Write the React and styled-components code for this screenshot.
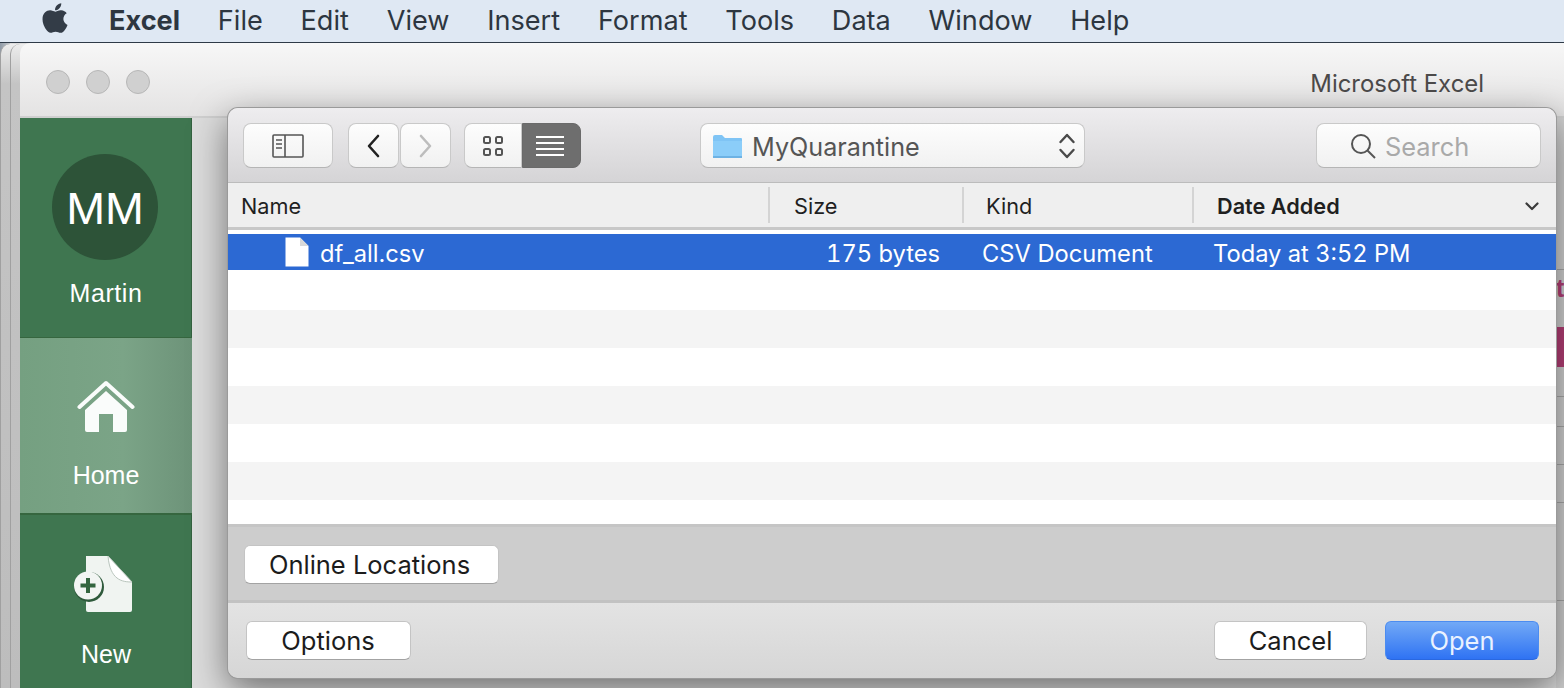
import React from "react";
import styled, { createGlobalStyle } from "styled-components";
import { FaApple } from "react-icons/fa";

const Global = createGlobalStyle`
  html, body { margin: 0; padding: 0; }
  body { font-family: Inter, "Liberation Sans", sans-serif; background: #c9c9c9; }
`;
const Page = styled.div`
  width: 1564px; height: 688px; overflow: hidden; display: flex; flex-direction: column;
`;
const MenuBar = styled.div`
  height: 42px; flex: none; display: flex; align-items: center; padding-left: 40px;
  background: #dfe8f3; border-bottom: 1px solid #2e3a47; color: #2d3640;
`;
const AppleMark = styled(FaApple)`
  width: 30px; height: 34px; margin-right: 39px; margin-top: -7px; color: #333c47;
`;
const MenuItem = styled.span`
  font-size: 27.1px; line-height: 40px; margin-right: 37.8px; font-weight: ${p => (p.$bold ? 700 : 400)};
`;
const Desktop = styled.div`
  flex: 1; position: relative; display: flex; padding-left: 20px;
  background: linear-gradient(90deg, #8f9aa6, #c5c8cc 10px, #dcdcdc 10px);
`;
const BackWindow = styled.div`
  position: absolute; top: 1px; bottom: 0; left: ${p => p.$left}px; width: 30px;
  border-radius: 10px 0 0 0; border-left: 1px solid #a0a0a0;
  background: linear-gradient(180deg, #ededed, #c4c4c4 40px, #bdbdbd);
`;
const MainWindow = styled.div`
  flex: 1; position: relative; display: flex; flex-direction: column; min-width: 0;
  border-radius: 10px 0 0 0; overflow: hidden;
`;
const TitleBar = styled.div`
  height: 73px; flex: none; display: flex; align-items: center; gap: 16px; padding-left: 26px;
  background: linear-gradient(180deg, #f7f7f7, #e4e3e3); border-bottom: 2px solid #cfcfcf;
  position: relative;
`;
const Light = styled.span`
  width: 22px; height: 22px; border-radius: 50%; background: #d0d0d0; border: 1px solid #b7b7b7;
  margin-top: 4px;
`;
const WindowTitle = styled.span`
  margin-left: auto; margin-right: 80px; font-size: 23.9px; color: #4c4a4a; margin-top: 8px;
`;
const Body = styled.div`
  flex: 1; display: flex; min-height: 0;
`;
const Sidebar = styled.nav`
  width: 172px; flex: none; display: flex; flex-direction: column; background: #3f7650;
  color: #fff; box-shadow: inset -1px 0 0 #33613f;
`;
const Profile = styled.div`
  height: 220px; flex: none; display: flex; flex-direction: column; align-items: center;
  padding-top: 36px; box-sizing: border-box; border-bottom: 1px solid #36663f;
`;
const Avatar = styled.div`
  width: 106px; height: 106px; border-radius: 50%; background: #2d5338; display: flex;
  align-items: center; justify-content: center; font-size: 43px; margin-left: -2px; color: #fff;
  padding-top: 2px; box-sizing: border-box;
`;
const SideLabel = styled.span`
  font-size: 25px; line-height: 30px; margin-top: ${p => p.$top}px; letter-spacing: ${p => p.$spacing || 0}px;
  font-family: "Liberation Sans", Inter, sans-serif;
`;
const HomeItem = styled.div`
  height: 177px; flex: none; box-sizing: border-box; padding-top: 42px; display: flex;
  flex-direction: column; align-items: center; border-bottom: 2px solid #36663f;
  background: linear-gradient(90deg, #75a081, #7ba487 60%, #6d9379);
`;
const NewItem = styled.div`
  flex: 1; display: flex; flex-direction: column; align-items: center; padding-top: 39px;
`;
const NewGlyph = styled.div`
  margin-left: -4px; display: flex;
`;
const Content = styled.div`
  flex: 1; background: #dcdcdc; position: relative;
`;
const RightGutter = styled.div`
  position: absolute; right: 0; top: 0; bottom: 0; width: 8px; overflow: hidden; background-color: #d2d2d2;
  background-image: linear-gradient(#a9a9a9, #a9a9a9), linear-gradient(#a9a9a9, #a9a9a9),
    linear-gradient(#a9a9a9, #a9a9a9), linear-gradient(#a9a9a9, #a9a9a9),
    linear-gradient(#a9a9a9, #a9a9a9), linear-gradient(#a9a9a9, #a9a9a9);
  background-size: 100% 1px; background-repeat: no-repeat;
  background-position: 0 151px, 0 278px, 0 308px, 0 346px, 0 384px, 0 482px;
`;
const PinkLetter = styled.span`
  position: absolute; left: 0; top: 155px; color: #b53f76; font-size: 25px; font-weight: 600;
  line-height: 30px; font-family: "Liberation Sans", sans-serif;
`;
const PinkBar = styled.div`
  position: absolute; right: 0; top: 209px; width: 8px; height: 40px; background: #b53f76;
`;
const Dialog = styled.div`
  position: absolute; left: 228px; top: 65px; width: 1328px; height: 570px; display: flex;
  flex-direction: column; border-radius: 10px; overflow: hidden;
  box-shadow: 0 0 0 1px #9a9a9a, 0 12px 36px rgba(0, 0, 0, 0.5);
`;
const Toolbar = styled.div`
  height: 75px; flex: none; box-sizing: border-box; display: flex; align-items: flex-start;
  padding: 15px 15px 0; background: linear-gradient(180deg, #eeedef, #d5d4d6);
  border-bottom: 1px solid #bcbcbc;
`;
const ToolButton = styled.button`
  height: 45px; width: ${p => p.$w}px; margin-left: ${p => p.$ml || 0}px; padding: 1px ${p => p.$pr || 0}px 0 0; display: flex;
  align-items: center; justify-content: center; box-sizing: border-box;
  background: ${p => (p.$active ? "#6e6e6e" : "linear-gradient(180deg, #fdfdfd, #f1f1f1)")};
  border: 1px solid ${p => (p.$active ? "#6a6a6a" : "#c9c9c9")};
  border-bottom-color: ${p => (p.$active ? "#6a6a6a" : "#b5b5b5")};
  border-radius: ${p => p.$radius || "8px"};
`;
const SelectBox = styled.div`
  width: 385px; height: 45px; margin-left: 119px; box-sizing: border-box; display: flex; align-items: center;
  padding: 1px 8px 0 11px; border-radius: 8px; border: 1px solid #c9c9c9; border-bottom-color: #b5b5b5;
  background: linear-gradient(180deg, #fdfdfd, #f1f1f1); color: #555;
`;
const SelectText = styled.span`
  font-size: 25.2px; margin: 2px 0 0 9px; flex: 1;
`;
const SearchBox = styled.div`
  width: 225px; height: 45px; margin-left: auto; box-sizing: border-box; display: flex; align-items: center;
  padding: 1px 0 0 33px; gap: 9px; border-radius: 8px; border: 1px solid #c9c9c9; border-bottom-color: #b5b5b5;
  background: linear-gradient(180deg, #fdfdfd, #f1f1f1);
`;
const SearchText = styled.span`
  font-size: 25.4px; color: #a9a9a9;
`;
const columns = "542px 194px 230px 1fr";
const HeaderRow = styled.div`
  height: 44px; flex: none; display: grid; grid-template-columns: ${columns}; background: #efefef;
  border-bottom: 3px solid #c8c8c8; align-items: center; color: #1f1f1f; box-sizing: content-box;
`;
const HeaderCell = styled.div`
  height: 36px; display: flex; align-items: center; font-size: 21.7px; box-sizing: border-box;
  padding-left: ${p => p.$pl}px; padding-top: 2px; font-weight: ${p => (p.$bold ? 600 : 400)};
  border-right: ${p => (p.$sep ? "2px solid #d4d4d4" : "none")}; justify-content: ${p => (p.$between ? "space-between" : "flex-start")};
  padding-right: ${p => (p.$between ? 17 : 0)}px;
`;
const List = styled.div`
  flex: none; background: #fff; padding-top: 4px; display: flex; flex-direction: column;
`;
const FileRow = styled.div`
  height: 36px; flex: none; box-sizing: border-box; padding-top: 2px; display: grid;
  grid-template-columns: ${columns}; align-items: center;
  background: #2c69d3; color: #fff; font-size: 23.7px;
`;
const NameCell = styled.div`
  display: flex; align-items: center; gap: 11px; padding-left: 57px;
`;
const DocWrap = styled.span`
  display: flex; margin-top: -2px;
`;
const SizeCell = styled.div`
  text-align: right; padding-right: 24px; font-variant-numeric: tabular-nums;
`;
const KindCell = styled.div`
  padding-left: 18px;
`;
const DateCell = styled.div`
  padding-left: 19px; font-variant-numeric: tabular-nums;
`;
const Stripe = styled.div`
  height: ${p => p.$h}px; flex: none; background: ${p => (p.$alt ? "#f4f4f4" : "#fff")};
`;
const Accessory = styled.div`
  height: 79px; flex: none; box-sizing: border-box; background: #cdcdcd; border-top: 3px solid #c5c5c5;
  border-bottom: 3px solid #c2c2c2; padding: 18px 0 0 16px;
`;
const Footer = styled.div`
  flex: 1; display: flex; align-items: flex-start; padding: 18px 17px 0 17.5px;
  background: linear-gradient(180deg, #e3e3e3, #d6d6d6);
`;
const PushButton = styled.button`
  width: ${p => p.$w}px; height: 39px; margin-left: ${p => p.$ml || 0}px; padding: 0 ${p => p.$pr || 0}px 0 0; font: inherit;
  font-size: 25.5px; color: #1c1c1c; background: #fff; border: 1px solid #c4c4c4;
  border-bottom-color: #a3a3a3; border-radius: 6px; box-sizing: border-box;
`;
const OpenButton = styled(PushButton)`
  color: #eaf2ff; background: linear-gradient(180deg, #72a9f6, #2f73f3); border-color: #4c8cf0;
  border-bottom-color: #2a68e0;
`;
const Spacer = styled.div`
  flex: 1;
`;

const HomeIcon = () => (
  <svg width="58" height="54" viewBox="0 0 58 54">
    <path d="M2.5 27 L29 3 L55.5 27" fill="none" stroke="#fafcfb" strokeWidth="4" strokeLinecap="round" strokeLinejoin="round" />
    <path d="M8 30 L29 11 L50 30 V50 a2 2 0 0 1 -2 2 H36 V34 H22 V52 H10 a2 2 0 0 1 -2 -2 Z" fill="#fafcfb" />
  </svg>
);
const NewIcon = () => (
  <svg width="62" height="60" viewBox="0 0 62 60">
    <path d="M13 2 H35 L59 28 V56 a2 2 0 0 1 -2 2 H15 a2 2 0 0 1 -2 -2 Z" fill="#f0f4f1" />
    <path d="M35 2 L59 28 C49 28 37 26 35 2 Z" fill="#ffffff" stroke="#b9c5bd" strokeWidth="1" />
    <circle cx="16" cy="33" r="15" fill="#2f5a3c" />
    <circle cx="15" cy="31.5" r="14" fill="#f2f5f3" />
    <path d="M15 24 V39 M7.5 31.5 H22.5" stroke="#33653f" strokeWidth="4" />
  </svg>
);
const SidebarIcon = () => (
  <svg width="32" height="24" viewBox="0 0 32 24" fill="none" stroke="#555" strokeWidth="1.6">
    <rect x="1" y="1" width="30" height="22" rx="1" />
    <path d="M13 1 V23 M4 6 H10 M4 10 H10 M4 14 H10" />
  </svg>
);
const Chevron = ({ d, color }) => (
  <svg width="18" height="26" viewBox="0 0 18 26" fill="none" stroke={color} strokeWidth="2.6" strokeLinecap="round" strokeLinejoin="round">
    <path d={d} />
  </svg>
);
const GridIcon = () => (
  <svg width="22" height="22" viewBox="0 0 22 22" fill="none" stroke="#555" strokeWidth="2">
    <rect x="2" y="2" width="6" height="6" rx="1.5" />
    <rect x="14" y="2" width="6" height="6" rx="1.5" />
    <rect x="2" y="14" width="6" height="6" rx="1.5" />
    <rect x="14" y="14" width="6" height="6" rx="1.5" />
  </svg>
);
const ListIcon = () => (
  <svg width="30" height="22" viewBox="0 0 30 22" stroke="#fff" strokeWidth="2">
    <path d="M1 2 H29 M1 8 H29 M1 14 H29 M1 20 H29" />
  </svg>
);
const FolderIcon = () => (
  <svg width="31" height="25" viewBox="0 0 31 25">
    <path d="M1 3 a2 2 0 0 1 2 -2 H10 L13 4 H29 a1 1 0 0 1 1 1 V23 a1 1 0 0 1 -1 1 H2 a1 1 0 0 1 -1 -1 Z" fill="#7fc4f5" />
    <path d="M1 7 H30 V23 a1 1 0 0 1 -1 1 H2 a1 1 0 0 1 -1 -1 Z" fill="#8bcdf9" />
    <path d="M1 23 H30" stroke="#63a9dc" strokeWidth="1.4" />
  </svg>
);
const UpDown = () => (
  <svg width="18" height="28" viewBox="0 0 18 28" fill="none" stroke="#4a4a4a" strokeWidth="2.4" strokeLinecap="round" strokeLinejoin="round">
    <path d="M2.5 10 L9 3 L15.5 10 M2.5 18 L9 25 L15.5 18" />
  </svg>
);
const SearchIcon = () => (
  <svg width="26" height="26" viewBox="0 0 26 26" fill="none" stroke="#555" strokeWidth="2">
    <circle cx="11" cy="11" r="9" />
    <path d="M17.5 17.5 L25 25" />
  </svg>
);
const SortIcon = () => (
  <svg width="14" height="9" viewBox="0 0 14 9" fill="none" stroke="#3a3a3a" strokeWidth="2.2" strokeLinecap="round" strokeLinejoin="round">
    <path d="M1.5 1.5 L7 7 L12.5 1.5" />
  </svg>
);
const DocIcon = () => (
  <svg width="24" height="30" viewBox="0 0 24 30">
    <path d="M0.5 0.5 H15 L23.5 9 V29.5 H0.5 Z" fill="#fff" />
    <path d="M15 0.5 V9 H23.5 Z" fill="#d9d9d9" />
  </svg>
);

const menu = ["File", "Edit", "View", "Insert", "Format", "Tools", "Data", "Window", "Help"];
const stripes = [
  { h: 40 }, { h: 38, alt: true }, { h: 38 }, { h: 38, alt: true }, { h: 38 }, { h: 38, alt: true }, { h: 24 },
];

export default function App() {
  return (
    <Page>
      <Global />
      <MenuBar>
        <AppleMark />
        <MenuItem $bold>Excel</MenuItem>
        {menu.map(m => <MenuItem key={m}>{m}</MenuItem>)}
      </MenuBar>
      <Desktop>
        <BackWindow $left={0} />
        <BackWindow $left={10} />
        <MainWindow>
          <TitleBar>
            <Light /><Light /><Light />
            <WindowTitle>Microsoft Excel</WindowTitle>
          </TitleBar>
          <Body>
            <Sidebar>
              <Profile>
                <Avatar>MM</Avatar>
                <SideLabel $top={18} $spacing={0.6}>Martin</SideLabel>
              </Profile>
              <HomeItem>
                <HomeIcon />
                <SideLabel $top={26}>Home</SideLabel>
              </HomeItem>
              <NewItem>
                <NewGlyph><NewIcon /></NewGlyph>
                <SideLabel $top={25}>New</SideLabel>
              </NewItem>
            </Sidebar>
            <Content>
              <RightGutter>
                <PinkLetter>t</PinkLetter>
                <PinkBar />
              </RightGutter>
            </Content>
          </Body>
        </MainWindow>
        <Dialog>
          <Toolbar>
            <ToolButton $w={90}><SidebarIcon /></ToolButton>
            <ToolButton $w={51} $ml={15}><Chevron d="M13 3 L4 13 L13 23" color="#222" /></ToolButton>
            <ToolButton $w={51} $ml={1} $pr={2}><Chevron d="M5 3 L14 13 L5 23" color="#bdbdbd" /></ToolButton>
            <ToolButton $w={58} $ml={13} $radius="8px 0 0 8px"><GridIcon /></ToolButton>
            <ToolButton $w={59} $active $pr={4} $radius="0 8px 8px 0"><ListIcon /></ToolButton>
            <SelectBox>
              <FolderIcon />
              <SelectText>MyQuarantine</SelectText>
              <UpDown />
            </SelectBox>
            <SearchBox>
              <SearchIcon />
              <SearchText>Search</SearchText>
            </SearchBox>
          </Toolbar>
          <HeaderRow>
            <HeaderCell $pl={13} $sep>Name</HeaderCell>
            <HeaderCell $pl={24} $sep>Size</HeaderCell>
            <HeaderCell $pl={22} $sep>Kind</HeaderCell>
            <HeaderCell $pl={23} $bold $between>Date Added<SortIcon /></HeaderCell>
          </HeaderRow>
          <List>
            <FileRow>
              <NameCell><DocWrap><DocIcon /></DocWrap>df_all.csv</NameCell>
              <SizeCell>175 bytes</SizeCell>
              <KindCell>CSV Document</KindCell>
              <DateCell>Today at 3:52 PM</DateCell>
            </FileRow>
            {stripes.map((s, i) => <Stripe key={i} $h={s.h} $alt={s.alt} />)}
          </List>
          <Accessory>
            <PushButton $w={255} $pr={4}>Online Locations</PushButton>
          </Accessory>
          <Footer>
            <PushButton $w={165}>Options</PushButton>
            <Spacer />
            <PushButton $w={153}>Cancel</PushButton>
            <OpenButton $w={154} $ml={18}>Open</OpenButton>
          </Footer>
        </Dialog>
      </Desktop>
    </Page>
  );
}
